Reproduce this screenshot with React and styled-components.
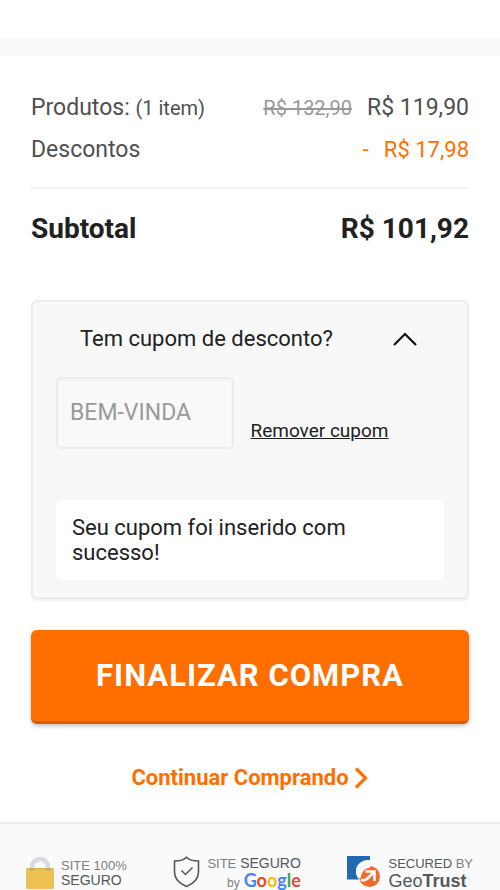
import React, { useState } from "react";
import styled, { createGlobalStyle } from "styled-components";

const ORANGE = "#ff6f00";

const GlobalStyle = createGlobalStyle`
  *, *::before, *::after { box-sizing: border-box; }
  body {
    margin: 0;
    background: #fff;
    color: #212121;
    font-family: Roboto, "Liberation Sans", sans-serif;
  }
  button, input { font-family: inherit; }
`;

const Page = styled.div`
  display: flex;
  flex-direction: column;
`;

const TopBand = styled.div`
  height: 18px;
  margin-top: 38px;
  background: #fafafa;
`;

const Content = styled.main`
  display: flex;
  flex-direction: column;
  padding: 33px 31px 29px;
`;

const Totals = styled.dl`
  margin: 0;
`;

const Line = styled.div`
  display: flex;
  justify-content: space-between;
  align-items: baseline;
  height: 42px;
  line-height: 38px;
  color: #4f4f4f;
`;

const Label = styled.dt`
  font-size: 23px;
`;

const Small = styled.span`
  font-size: 20px;
`;

const Value = styled.dd`
  display: flex;
  align-items: baseline;
  gap: 15px;
  margin: 0;
  font-size: ${(p) => (p.$accent ? 22 : 23)}px;
  color: ${(p) => (p.$accent ? ORANGE : "inherit")};
`;

const OldPrice = styled.s`
  font-size: 20px;
  color: #999;
`;

const Subtotal = styled.div`
  display: flex;
  justify-content: space-between;
  margin-top: 14px;
  padding-top: 20px;
  border-top: 2px solid #f1f1f1;
  font-size: 28px;
  font-weight: 700;
  line-height: 40px;
`;

const SubtotalValue = styled.dd`
  margin: 0;
`;

const Coupon = styled.section`
  margin-top: 51px;
  padding: 17px 23px;
  border: 2px solid #ececec;
  border-radius: 6px;
  background: #f8f8f8;
  box-shadow: 0 2px 2px #f0f0f0;
`;

const CouponToggle = styled.button`
  display: flex;
  justify-content: space-between;
  align-items: center;
  width: 100%;
  padding: 0 27px 0 24px;
  border: 0;
  background: none;
  color: inherit;
  font-size: 22px;
  line-height: 40px;
  cursor: pointer;
`;

const CouponRow = styled.div`
  display: flex;
  align-items: flex-end;
  gap: 16px;
  margin-top: 18px;
`;

const CouponInput = styled.input`
  width: 46%;
  height: 72px;
  padding: 0 12px 2px;
  border: 2px solid #ececec;
  border-radius: 5px;
  background: #f9f9f9;
  color: #999;
  font-size: 23px;
  box-shadow: inset 0 2px 2px #f3f3f3;
`;

const RemoveButton = styled.button`
  padding: 0 0 6px;
  border: 0;
  background: none;
  color: inherit;
  font-size: 19px;
  line-height: 24px;
  text-decoration: underline;
  cursor: pointer;
`;

const Notice = styled.p`
  margin: 51px 0 0;
  padding: 15px 16px;
  border-radius: 6px;
  background: #fff;
  font-size: 22px;
  line-height: 25px;
`;

const BuyButton = styled.button`
  height: 94px;
  margin-top: 31px;
  padding: 0;
  border: 0;
  border-bottom: 3px solid #d65d00;
  border-radius: 6px;
  background: ${ORANGE};
  color: #fff;
  font-size: 31px;
  font-weight: 700;
  letter-spacing: 1px;
  box-shadow: 0 2px 4px rgba(0, 0, 0, 0.25);
  cursor: pointer;
`;

const ContinueLink = styled.a`
  display: flex;
  align-self: center;
  align-items: center;
  gap: 4px;
  margin-top: 39px;
  color: ${ORANGE};
  font-size: 22px;
  font-weight: 700;
  line-height: 30px;
  text-decoration: none;
`;

const Footer = styled.footer`
  display: flex;
  justify-content: space-between;
  align-items: flex-start;
  padding: 32px 27px 0 26px;
  border-top: 2px solid #ececec;
  background: #fafafa;
  color: #53585c;
  font-family: "Liberation Sans", sans-serif;
`;

const Seal = styled.div`
  display: flex;
  align-items: flex-start;
  gap: 7px;
`;

const SealText = styled.div`
  display: flex;
  flex-direction: column;
  align-items: ${(p) => p.$align || "flex-start"};
  padding-top: ${(p) => p.$top || 0}px;
  font-size: 14px;
  line-height: 15px;
  white-space: nowrap;
`;

const Light = styled.span`
  color: #7c8083;
  font-size: 13px;
`;

const Secured = styled.span`
  font-size: 13px;
`;

const GoogleLine = styled.span`
  display: flex;
  align-items: baseline;
  gap: 4px;
  color: #7c8083;
  font-size: 12px;
  line-height: 18px;
`;

const GoogleWord = styled.span`
  font-family: Lato, sans-serif;
  font-size: 18px;
  font-weight: 700;
`;

const Letter = styled.span`
  color: ${(p) => p.$color};
`;

const GeoTrust = styled.span`
  font-size: 18px;
  line-height: 20px;
`;

const GOOGLE = [
  ["G", "#4285f4"],
  ["o", "#ea4335"],
  ["o", "#fbbc05"],
  ["g", "#4285f4"],
  ["l", "#34a853"],
  ["e", "#ea4335"],
];

const CaretUp = () => (
  <svg width="24" height="14" viewBox="0 0 24 14" fill="none" aria-hidden="true">
    <path d="M1 13 12 2l11 11" stroke="#111" strokeWidth="2.2" />
  </svg>
);

const ChevronRight = () => (
  <svg width="16" height="22" viewBox="0 0 16 22" fill="none" aria-hidden="true">
    <path d="M3 1.500 12.500 11 3 20.500" stroke={ORANGE} strokeWidth="3.200" />
  </svg>
);

const Padlock = () => (
  <svg width="28" height="33" viewBox="0 0 28 33" aria-hidden="true">
    <path d="M6 15v-4a8 8 0 0 1 16 0v4" fill="none" stroke="#d9dadf" strokeWidth="4.500" />
    <rect x="0" y="12" width="28" height="21" rx="1.500" fill="#edc255" />
    <path d="M1 12.700h26" stroke="#d9b04c" strokeWidth="1.400" />
    <path d="M4 12h4v3H4zM20 12h4v3h-4z" fill="#d3ab4d" />
  </svg>
);

const Shield = () => (
  <svg width="27" height="32" viewBox="0 0 27 32" fill="none" stroke="#53585c" aria-hidden="true">
    <path
      d="M13.500 1.200C11 4 6.500 5 1.500 5v11c0 6.500 5 11.500 12 14.500 7-3 12-8 12-14.500V5c-5 0-9.500-1-12-3.800Z"
      strokeWidth="1.600"
    />
    <path d="m8.500 14.500 4 4 7-7" strokeWidth="1.500" />
  </svg>
);

const GeoMark = () => (
  <svg width="34" height="32" viewBox="0 0 34 32" aria-hidden="true">
    <path d="M0 0h23v4C15 3.500 9 8.500 9 15.500c0 3 1 5.500 3 8H0Z" fill="#2169b3" />
    <circle cx="22.500" cy="20.500" r="10.500" fill="#f26a2e" />
    <path
      d="M24 4C15 3 9 8.500 9 15.500c0 2.500.8 4.800 2 6.500l3-.5c0-5 3.500-9 9-10Z"
      fill="#fff"
    />
    <path d="M18.500 15.500h9v9.500" fill="none" stroke="#fff" strokeWidth="2.600" />
    <path d="M27 16 20.500 22.500c-1.800 1.800-4.500 2-6.500 1" fill="none" stroke="#fff" strokeWidth="2.600" />
  </svg>
);

export default function App() {
  const [open, setOpen] = useState(true);
  const [code, setCode] = useState("BEM-VINDA");

  return (
    <>
      <GlobalStyle />
      <Page>
        <TopBand />
        <Content>
          <Totals>
            <Line>
              <Label>
                Produtos: <Small>(1 item)</Small>
              </Label>
              <Value>
                <OldPrice>R$ 132,90</OldPrice>
                <span>R$ 119,90</span>
              </Value>
            </Line>
            <Line>
              <Label>Descontos</Label>
              <Value $accent>
                <span>-</span>
                <span>R$ 17,98</span>
              </Value>
            </Line>
            <Subtotal>
              <dt>Subtotal</dt>
              <SubtotalValue>R$ 101,92</SubtotalValue>
            </Subtotal>
          </Totals>

          <Coupon>
            <CouponToggle type="button" aria-expanded={open} onClick={() => setOpen(!open)}>
              Tem cupom de desconto?
              <CaretUp />
            </CouponToggle>
            {open && (
              <>
                <CouponRow>
                  <CouponInput
                    aria-label="Cupom de desconto"
                    value={code}
                    onChange={(e) => setCode(e.target.value)}
                  />
                  <RemoveButton type="button" onClick={() => setCode("")}>
                    Remover cupom
                  </RemoveButton>
                </CouponRow>
                <Notice role="status">Seu cupom foi inserido com sucesso!</Notice>
              </>
            )}
          </Coupon>

          <BuyButton type="button">FINALIZAR COMPRA</BuyButton>
          <ContinueLink href="#">
            Continuar Comprando
            <ChevronRight />
          </ContinueLink>
        </Content>

        <Footer>
          <Seal>
            <Padlock />
            <SealText $top={2}>
              <Light>SITE 100%</Light>
              <span>SEGURO</span>
            </SealText>
          </Seal>
          <Seal>
            <Shield />
            <SealText $align="flex-end">
              <span>
                <Light>SITE</Light> SEGURO
              </span>
              <GoogleLine>
                by
                <GoogleWord>
                  {GOOGLE.map(([letter, color], i) => (
                    <Letter key={i} $color={color}>
                      {letter}
                    </Letter>
                  ))}
                </GoogleWord>
              </GoogleLine>
            </SealText>
          </Seal>
          <Seal>
            <GeoMark />
            <SealText>
              <Secured>
                SECURED <Light>BY</Light>
              </Secured>
              <GeoTrust>
                Geo<b>Trust</b>
              </GeoTrust>
            </SealText>
          </Seal>
        </Footer>
      </Page>
    </>
  );
}
